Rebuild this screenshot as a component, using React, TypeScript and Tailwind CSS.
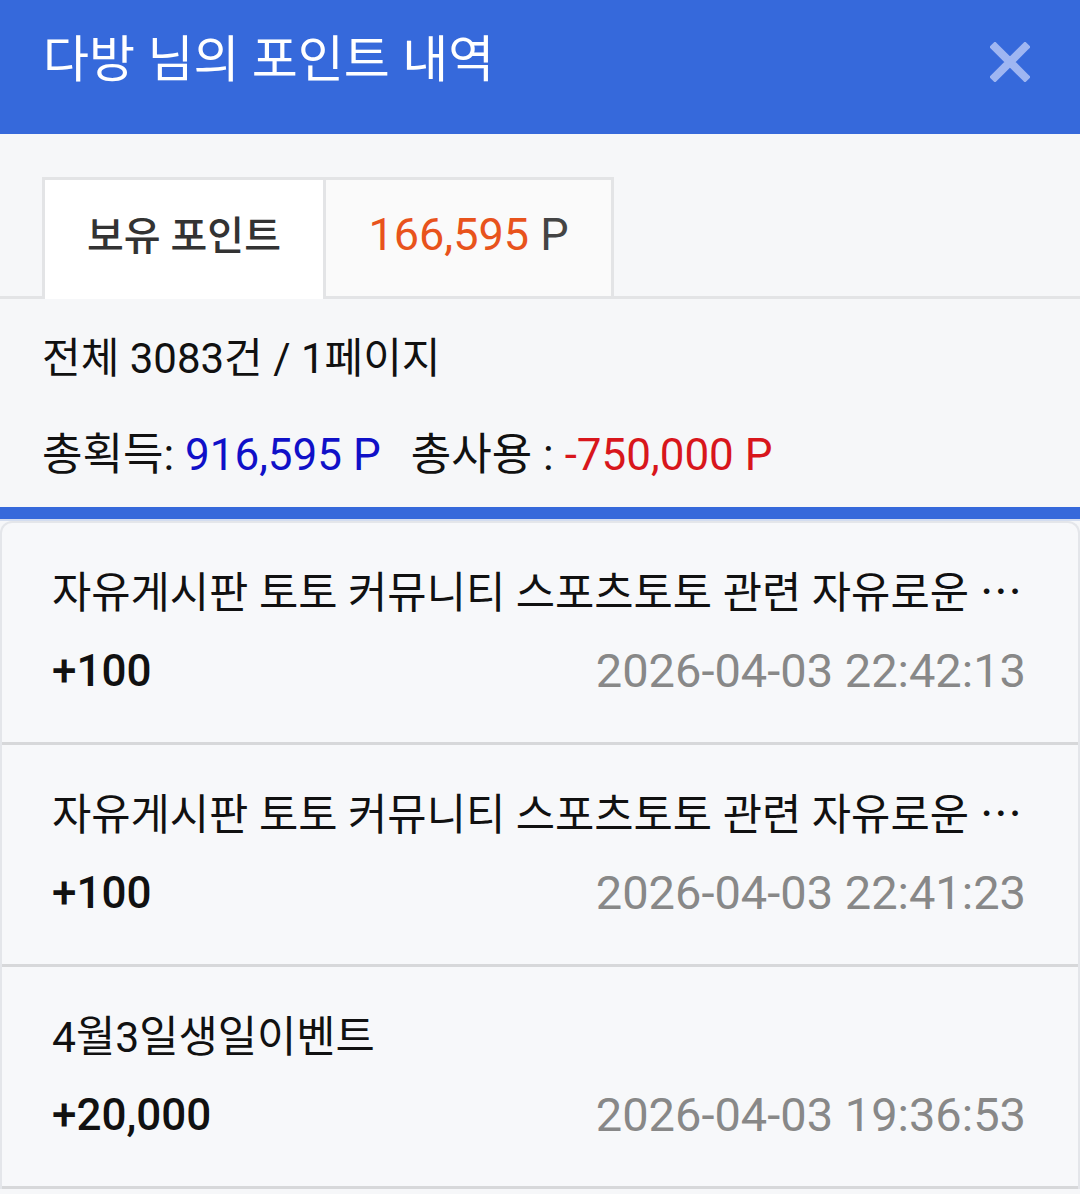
import React from "react";

const font = { fontFamily: 'Roboto, "Noto Sans CJK KR", "Noto Sans", sans-serif' };

const items = [
  { title: "자유게시판 토토 커뮤니티 스포츠토토 관련 자유로운 ⋯", amount: "+100", date: "2026-04-03 22:42:13" },
  { title: "자유게시판 토토 커뮤니티 스포츠토토 관련 자유로운 ⋯", amount: "+100", date: "2026-04-03 22:41:23" },
  { title: "4월3일생일이벤트", amount: "+20,000", date: "2026-04-03 19:36:53" },
];

export default function App() {
  return (
    <div className="w-[1080px] min-h-[1194px] bg-[#f6f7f9] overflow-hidden" style={font}>
      <header className="h-[134px] bg-[#3669db] flex items-center justify-between pl-[43px] pr-[50px]">
        <h1 className="text-[50px] leading-none text-white -mt-[14px]">다방 님의 포인트 내역</h1>
        <svg width="40" height="40" viewBox="0 0 40 40" className="-mt-[10px]">
          <path d="M5 5 L35 35 M35 5 L5 35" stroke="#9fb6f2" strokeWidth="8" strokeLinecap="square" />
        </svg>
      </header>

      <div className="pt-[43px] px-[42px] border-b-[3px] border-[#e3e4e6] flex">
        <div className="w-[284px] h-[122px] -mb-[3px] bg-white border-t-[3px] border-l-[3px] border-r-[3px] border-[#e3e4e6] flex items-center justify-center">
          <span className="text-[40px] font-medium text-[#333] -mt-[6px]">보유 포인트</span>
        </div>
        <div className="w-[288px] h-[119px] bg-[#fafafa] border-t-[3px] border-r-[3px] border-[#e3e4e6] flex items-center justify-center">
          <span className="text-[45px] -mt-[6px]">
            <span className="text-[#e8531c]">166,595</span>
            <span className="text-[#444]"> P</span>
          </span>
        </div>
      </div>

      <div className="px-[42px] pt-[34px] pb-[26px] text-[#111]">
        <div className="leading-[52px] text-[42px]">전체 3083건 / 1페이지</div>
        <div className="leading-[52px] mt-[44px] text-[44px] whitespace-nowrap">
          총획득: <span className="text-[#1010c8]">916,595 P</span>
          <span className="ml-[30px]">총사용 : </span>
          <span className="text-[#d8161c]">-750,000 P</span>
        </div>
      </div>

      <div className="h-[12px] bg-[#3669db]" />
      <div className="h-[2px] bg-[#d3ddf0]" />

      <div className="rounded-t-[12px] border-t-[2px] border-l-[2px] border-r-[2px] border-[#e4e6ea] bg-[#f7f8fa]">
        {items.map((it, i) => (
          <div key={i} className="h-[222px] border-b-[3px] border-[#d7d8da] pl-[50px] pr-[52px] pt-[44px]">
            <div className="text-[42.7px] leading-[52px] text-[#111] whitespace-nowrap">{it.title}</div>
            <div className="flex items-center justify-between mt-[26px]">
              <span className="text-[44px] leading-[52px] font-medium text-[#111]">{it.amount}</span>
              <span className="text-[47px] leading-[52px] text-[#888]">{it.date}</span>
            </div>
          </div>
        ))}
      </div>
    </div>
  );
}
